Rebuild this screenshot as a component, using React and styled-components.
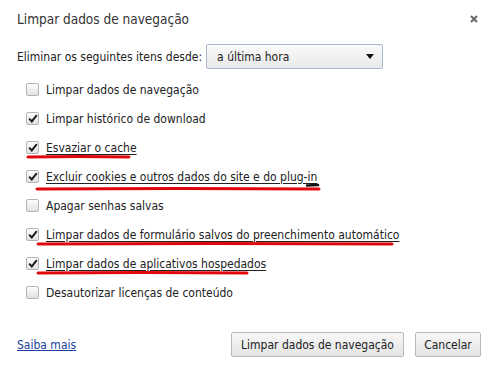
import React from "react";
import styled, { createGlobalStyle } from "styled-components";

const GlobalStyle = createGlobalStyle`
	html, body {
		margin: 0;
		padding: 0;
		background: #fff;
	}
	body {
		font-family: "DejaVu Sans Condensed", Tahoma, sans-serif;
		color: #222;
	}
`;

const Dialog = styled.div`
	width: 499px;
	height: 369px;
	display: flex;
	flex-direction: column;
	box-sizing: border-box;
	padding: 0 18px 0 17px;
	background: #fff;
`;

const Header = styled.div`
	height: 38px;
	display: flex;
	align-items: center;
	justify-content: space-between;
`;

const Title = styled.h1`
	margin: 0;
	font-size: 13.5px;
	font-weight: normal;
	color: #333;
`;

const Close = styled.button`
	width: 14px;
	height: 14px;
	padding: 0;
	border: none;
	background: none;
	display: flex;
	align-items: center;
	justify-content: center;
`;

const RangeRow = styled.div`
	height: 37px;
	display: flex;
	align-items: center;
	gap: 4px;
	font-size: 12px;
`;

const Select = styled.div`
	width: 177px;
	height: 25px;
	box-sizing: border-box;
	display: flex;
	align-items: center;
	justify-content: space-between;
	padding: 0 8px 0 10px;
	border: 1px solid #a9b8cf;
	border-radius: 2px;
	background: linear-gradient(#fafafa, #e9e9e9);
	font-size: 12px;
	color: #222;
`;

const Arrow = styled.span`
	width: 0;
	height: 0;
	border-left: 4px solid transparent;
	border-right: 4px solid transparent;
	border-top: 5px solid #111;
`;

const List = styled.div`
	display: flex;
	flex-direction: column;
`;

const Row = styled.label`
	position: relative;
	height: 29px;
	display: flex;
	align-items: center;
	padding-left: 9px;
	font-size: 12px;
	color: #222;
`;

const Box = styled.span`
	width: 13px;
	height: 13px;
	box-sizing: border-box;
	border: 1px solid #b4b4b4;
	border-radius: 2px;
	background: linear-gradient(#fdfdfd, #e2e2e2);
	display: flex;
	align-items: center;
	justify-content: center;
	margin-right: 7px;
`;

const Label = styled.span`
	text-decoration: ${(p) => (p.$underline ? "underline" : "none")};
	text-underline-offset: 2px;
`;

const Scribble = styled.svg`
	position: absolute;
	overflow: visible;
	pointer-events: none;
`;

const Footer = styled.div`
	margin-top: 25px;
	height: 25px;
	display: flex;
	align-items: center;
	justify-content: space-between;
`;

const Link = styled.a`
	font-size: 12px;
	color: #1a3fa0;
	text-decoration: underline;
`;

const Buttons = styled.div`
	display: flex;
	gap: 11px;
`;

const Button = styled.button`
	height: 25px;
	width: ${(p) => p.$w}px;
	padding: 0;
	border: 1px solid #b9b9b9;
	border-radius: 2px;
	background: linear-gradient(#f7f7f7, #e4e4e4);
	font-family: inherit;
	font-size: 12px;
	color: #222;
`;

const items = [
	{ text: "Limpar dados de navegação", checked: false },
	{ text: "Limpar histórico de download", checked: true },
	{ text: "Esvaziar o cache", checked: true, mark: { x: 10, w: 103, y: 7.5 } },
	{
		text: "Excluir cookies e outros dados do site e do plug-in",
		checked: true,
		mark: { x: 19, w: 284, y: 10.5, ink: true },
	},
	{ text: "Apagar senhas salvas", checked: false },
	{
		text: "Limpar dados de formulário salvos do preenchimento automático",
		checked: true,
		mark: { x: 20, w: 356, y: 7 },
	},
	{
		text: "Limpar dados de aplicativos hospedados",
		checked: true,
		mark: { x: 20, w: 211, y: 7 },
	},
	{ text: "Desautorizar licenças de conteúdo", checked: false },
];

function Check() {
	return (
		<svg width="10" height="9" viewBox="0 0 10 9">
			<path d="M1.2 4.6 L3.8 7.4 L8.8 1.2" fill="none" stroke="#1c1c1c" strokeWidth="2" />
		</svg>
	);
}

function Mark({ x, w, y, ink }) {
	return (
		<Scribble style={{ left: x, top: `calc(50% + ${y}px)` }} width={w} height="4">
			<path
				d={`M1 2 Q ${w / 2} 0.8 ${w - 1} 2`}
				fill="none"
				stroke="#e0080c"
				strokeWidth="3"
				strokeLinecap="round"
			/>
			{ink && (
				<path
					d={`M${w - 13} -1.5 L ${w - 2} -2`}
					stroke="#111"
					strokeWidth="2.5"
					strokeLinecap="round"
				/>
			)}
		</Scribble>
	);
}

export default function App() {
	return (
		<Dialog>
			<GlobalStyle />
			<Header>
				<Title>Limpar dados de navegação</Title>
				<Close aria-label="Fechar">
					<svg width="8" height="8" viewBox="0 0 8 8">
						<path d="M1 1 L7 7 M7 1 L1 7" stroke="#666" strokeWidth="2" />
					</svg>
				</Close>
			</Header>
			<RangeRow>
				<span>Eliminar os seguintes itens desde:</span>
				<Select>
					a última hora
					<Arrow />
				</Select>
			</RangeRow>
			<List>
				{items.map((it) => (
					<Row key={it.text}>
						<Box>{it.checked && <Check />}</Box>
						<Label $underline={!!it.mark}>{it.text}</Label>
						{it.mark && <Mark {...it.mark} />}
					</Row>
				))}
			</List>
			<Footer>
				<Link href="#">Saiba mais</Link>
				<Buttons>
					<Button $w={173}>Limpar dados de navegação</Button>
					<Button $w={66}>Cancelar</Button>
				</Buttons>
			</Footer>
		</Dialog>
	);
}
